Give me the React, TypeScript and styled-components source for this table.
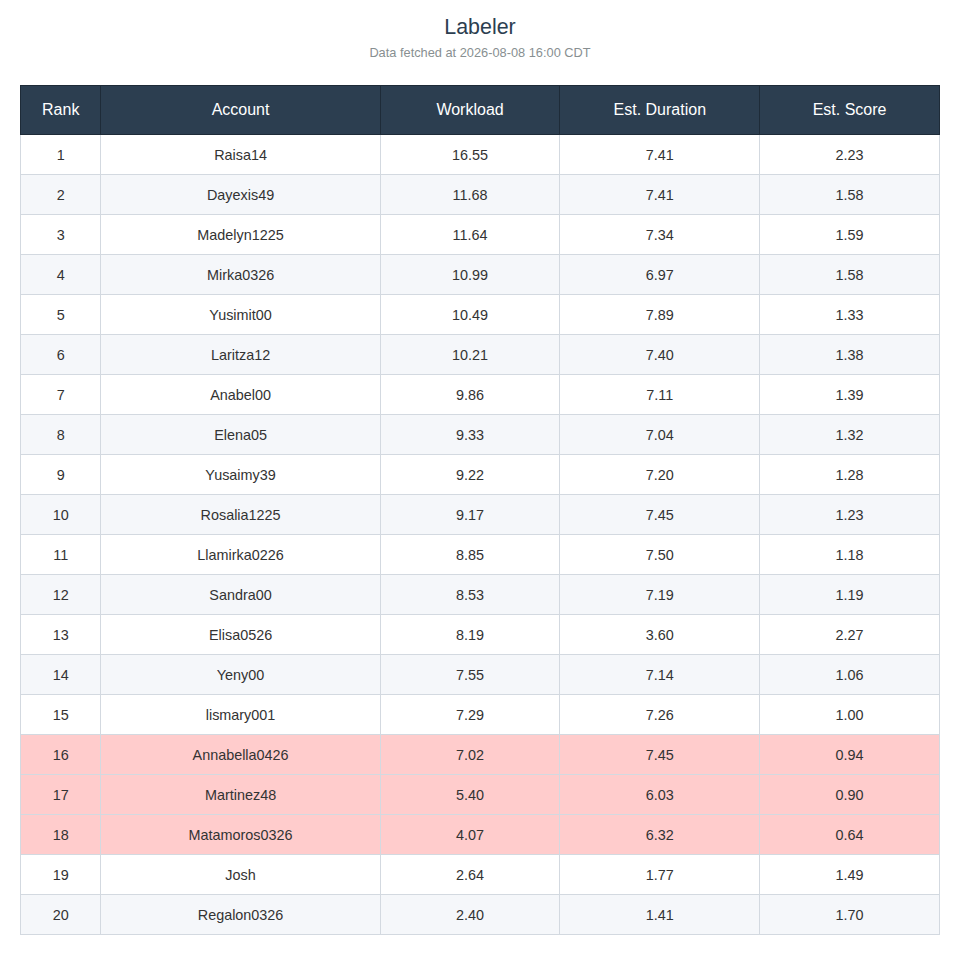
import React from 'react';
import styled, { createGlobalStyle } from 'styled-components';

const GlobalStyle = createGlobalStyle`
  body {
    margin: 0;
    background: #ffffff;
    font-family: 'Liberation Sans', Arial, sans-serif;
    color: #333333;
  }
`;

// 페이지 전체
const Page = styled.div`
  padding: 12px 20px 20px;
`;

const Title = styled.h1`
  margin: 0;
  font-size: 21.4px;
  line-height: 30px;
  font-weight: normal;
  text-align: center;
  color: #2c3e50;
`;

const Subtitle = styled.div`
  margin-top: 3px;
  font-size: 12.8px;
  line-height: 16px;
  text-align: center;
  color: #888f91;
`;

const Table = styled.table`
  width: 100%;
  margin-top: 24px;
  border-collapse: collapse;
  table-layout: fixed;
  font-size: 14.4px;
`;

const HeadCell = styled.th<{ $width: number }>`
  width: ${(p) => p.$width}%;
  height: 48px;
  padding: 0;
  background: #2c3e50;
  color: #ffffff;
  font-size: 16px;
  font-weight: normal;
  text-align: center;
  border: 1px solid #1e2b38;
`;

const Row = styled.tr<{ $low: boolean; $even: boolean }>`
  background: ${(p) => (p.$low ? '#ffcccc' : p.$even ? '#f5f7fa' : '#ffffff')};
`;

const Cell = styled.td`
  height: 39px;
  padding: 0;
  text-align: center;
  color: #333333;
  border: 1px solid #d3d9e0;
`;

interface Entry {
  account: string;
  workload: string;
  duration: string;
  score: string;
}

// 열 너비 (%)
const columns = [
  { label: 'Rank', width: (80 / 920) * 100 },
  { label: 'Account', width: (280 / 920) * 100 },
  { label: 'Workload', width: (180 / 920) * 100 },
  { label: 'Est. Duration', width: (200 / 920) * 100 },
  { label: 'Est. Score', width: (180 / 920) * 100 },
];

const entries: Entry[] = [
  { account: 'Raisa14', workload: '16.55', duration: '7.41', score: '2.23' },
  { account: 'Dayexis49', workload: '11.68', duration: '7.41', score: '1.58' },
  { account: 'Madelyn1225', workload: '11.64', duration: '7.34', score: '1.59' },
  { account: 'Mirka0326', workload: '10.99', duration: '6.97', score: '1.58' },
  { account: 'Yusimit00', workload: '10.49', duration: '7.89', score: '1.33' },
  { account: 'Laritza12', workload: '10.21', duration: '7.40', score: '1.38' },
  { account: 'Anabel00', workload: '9.86', duration: '7.11', score: '1.39' },
  { account: 'Elena05', workload: '9.33', duration: '7.04', score: '1.32' },
  { account: 'Yusaimy39', workload: '9.22', duration: '7.20', score: '1.28' },
  { account: 'Rosalia1225', workload: '9.17', duration: '7.45', score: '1.23' },
  { account: 'Llamirka0226', workload: '8.85', duration: '7.50', score: '1.18' },
  { account: 'Sandra00', workload: '8.53', duration: '7.19', score: '1.19' },
  { account: 'Elisa0526', workload: '8.19', duration: '3.60', score: '2.27' },
  { account: 'Yeny00', workload: '7.55', duration: '7.14', score: '1.06' },
  { account: 'lismary001', workload: '7.29', duration: '7.26', score: '1.00' },
  { account: 'Annabella0426', workload: '7.02', duration: '7.45', score: '0.94' },
  { account: 'Martinez48', workload: '5.40', duration: '6.03', score: '0.90' },
  { account: 'Matamoros0326', workload: '4.07', duration: '6.32', score: '0.64' },
  { account: 'Josh', workload: '2.64', duration: '1.77', score: '1.49' },
  { account: 'Regalon0326', workload: '2.40', duration: '1.41', score: '1.70' },
];

// 점수가 1 미만이면 강조
const isLow = (entry: Entry) => parseFloat(entry.score) < 1;

const App = () => {
  return (
    <Page>
      <GlobalStyle />
      <Title>Labeler</Title>
      <Subtitle>Data fetched at 2026-08-08 16:00 CDT</Subtitle>
      <Table>
        <thead>
          <tr>
            {columns.map((col) => (
              <HeadCell key={col.label} $width={col.width}>
                {col.label}
              </HeadCell>
            ))}
          </tr>
        </thead>
        <tbody>
          {entries.map((entry, i) => (
            <Row key={entry.account} $low={isLow(entry)} $even={i % 2 === 1}>
              <Cell>{i + 1}</Cell>
              <Cell>{entry.account}</Cell>
              <Cell>{entry.workload}</Cell>
              <Cell>{entry.duration}</Cell>
              <Cell>{entry.score}</Cell>
            </Row>
          ))}
        </tbody>
      </Table>
    </Page>
  );
};

export default App;
